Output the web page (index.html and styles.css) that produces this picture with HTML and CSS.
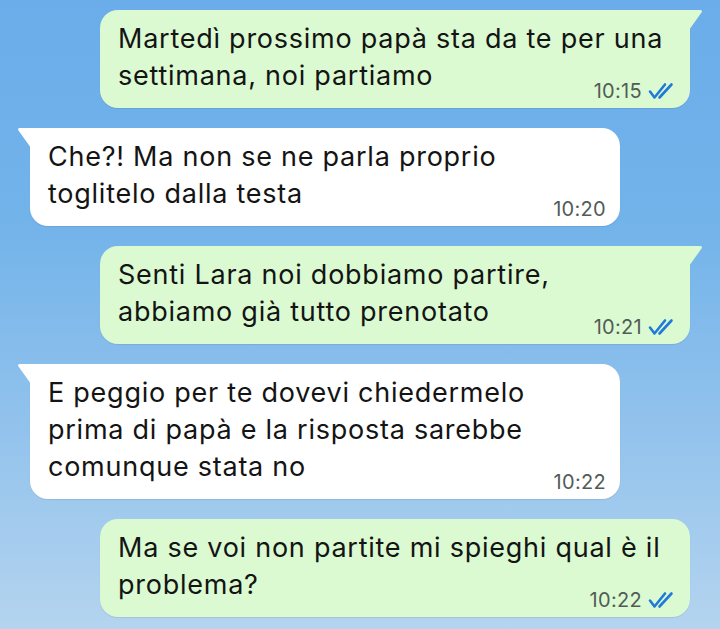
FILE: index.html
```html
<!DOCTYPE html>
<html lang="it">
<head>
<meta charset="utf-8">
<title>Chat</title>
<link rel="stylesheet" href="styles.css">
</head>
<body>
<main class="chat">
  <div class="msg out">
    <svg class="tail" width="14" height="20" viewBox="0 0 14 20"><path d="M0 0 H11 Q14 0 12.5 2.5 L0 20 Z"/></svg>
    <p class="text">Martedì prossimo papà sta da te per una<br>settimana, noi partiamo</p>
    <span class="meta"><span class="time">10:15</span><svg class="ticks" width="30" height="18" viewBox="0 0 30 18"><path d="M2 9.5 L6.5 15.5 L17 2.5 M11.5 15.5 L23.5 2.5"/></svg></span>
  </div>
  <div class="msg in">
    <svg class="tail" width="14" height="20" viewBox="0 0 14 20"><path d="M14 0 H3 Q0 0 1.5 2.5 L14 20 Z"/></svg>
    <p class="text">Che?! Ma non se ne parla proprio<br>toglitelo dalla testa</p>
    <span class="meta"><span class="time">10:20</span></span>
  </div>
  <div class="msg out">
    <svg class="tail" width="14" height="20" viewBox="0 0 14 20"><path d="M0 0 H11 Q14 0 12.5 2.5 L0 20 Z"/></svg>
    <p class="text">Senti Lara noi dobbiamo partire,<br>abbiamo già tutto prenotato</p>
    <span class="meta"><span class="time">10:21</span><svg class="ticks" width="30" height="18" viewBox="0 0 30 18"><path d="M2 9.5 L6.5 15.5 L17 2.5 M11.5 15.5 L23.5 2.5"/></svg></span>
  </div>
  <div class="msg in">
    <svg class="tail" width="14" height="20" viewBox="0 0 14 20"><path d="M14 0 H3 Q0 0 1.5 2.5 L14 20 Z"/></svg>
    <p class="text">E peggio per te dovevi chiedermelo<br>prima di papà e la risposta sarebbe<br>comunque stata no</p>
    <span class="meta"><span class="time">10:22</span></span>
  </div>
  <div class="msg out">
    <p class="text">Ma se voi non partite mi spieghi qual è il<br>problema?</p>
    <span class="meta"><span class="time">10:22</span><svg class="ticks" width="30" height="18" viewBox="0 0 30 18"><path d="M2 9.5 L6.5 15.5 L17 2.5 M11.5 15.5 L23.5 2.5"/></svg></span>
  </div>
</main>
</body>
</html>
```
FILE: styles.css
```css
* { box-sizing: border-box; }
html, body { margin: 0; height: 100%; }
body {
  width: 720px;
  height: 629px;
  overflow: hidden;
  font-family: Inter, "Noto Sans", sans-serif;
  background: linear-gradient(180deg, #6badea 0%, #72b3ea 35%, #8fc1ec 65%, #b4d4ef 100%);
}
.chat {
  display: flex;
  flex-direction: column;
  gap: 20px;
  padding-top: 10px;
}
.msg {
  position: relative;
  width: 590px;
  display: grid;
  padding: 10px 12px 14px 18px;
  border-radius: 18px;
  box-shadow: 0 1px 1px rgba(0, 0, 0, 0.08);
}
.msg > .text, .msg > .meta { grid-area: 1 / 1; }
.msg.out {
  align-self: flex-end;
  margin-right: 30px;
  background: #dbfad2;
  border-top-right-radius: 0;
}
.msg.in {
  margin-left: 30px;
  background: #ffffff;
  border-top-left-radius: 0;
}
.msg.in .meta { margin-right: 2px; }
.msg.out:last-child { border-top-right-radius: 18px; }
.tail {
  position: absolute;
  top: 0;
}
.out .tail { right: -13px; fill: #dbfad2; }
.in .tail { left: -13px; fill: #ffffff; }
.text {
  margin: 0;
  font-size: 27px;
  line-height: 37px;
  color: #141414;
  letter-spacing: 0.75px;
  white-space: nowrap;
}
.meta {
  justify-self: end;
  align-self: end;
  display: flex;
  align-items: center;
  gap: 6px;
  margin-bottom: -7px;
  line-height: 20px;
}
.time {
  font-size: 20px;
  letter-spacing: 0.3px;
  color: #525c56;
}
.ticks {
  fill: none;
  stroke: #1f7ad8;
  stroke-width: 2.6;
  stroke-linecap: round;
  stroke-linejoin: round;
}
```
